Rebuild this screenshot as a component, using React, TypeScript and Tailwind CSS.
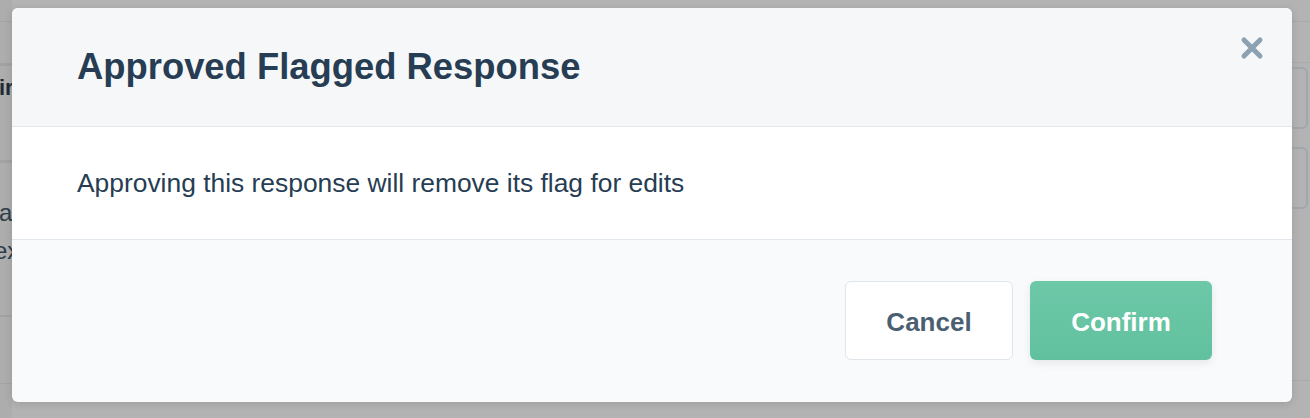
import React from 'react';

// Backdrop strip on the left edge (page content dimmed by the overlay)
const LeftStrip: React.FC = () => (
  <div className="w-[12px] shrink-0 flex flex-col overflow-hidden bg-[#adadad]">
    <div className="h-[22px] border-b border-[#a3a3a3]" />
    <div className="h-[41px]" />
    <div className="h-[3px] bg-[#a2a2a2]" />
    <div className="h-[94px] flex flex-col items-start pt-[11px] whitespace-nowrap text-[22px] font-bold text-[#1e2a35] leading-none">
      <span className="ml-[-1px]">ir</span>
    </div>
    <div className="h-[3px] bg-[#a2a2a2]" />
    <div className="h-[152px] flex flex-col items-start pt-[31px] whitespace-nowrap text-[24px] text-[#2d3d4c] leading-[38px]">
      <span className="ml-[-1px]">a</span>
      <span className="ml-[-6px]">ex</span>
    </div>
    <div className="h-[2px] bg-[#a2a2a2]" />
    <div className="h-[66px]" />
    <div className="h-[1px] bg-[#a3a3a3]" />
  </div>
);

// Backdrop strip on the right edge
const RightStrip: React.FC = () => (
  <div className="flex-1 flex flex-col bg-[#b3b3b3]">
    <div className="h-[22px] border-b border-[#a9a9a9]" />
    <div className="h-[41px] border-b border-[#ababab]" />
    <div className="h-[4px]" />
    <div className="h-[62px] ml-[-4px] mr-[2px] rounded-[6px] border-2 border-[#a3a7ab]" />
    <div className="h-[18px]" />
    <div className="h-[62px] ml-[-4px] mr-[2px] rounded-[6px] border-2 border-[#a3a7ab]" />
    <div className="h-[172px] border-b border-[#a9a9a9]" />
  </div>
);

const CloseIcon: React.FC = () => (
  <svg width="26" height="26" viewBox="0 0 26 26" fill="none">
    <path d="M5 5L21 21M21 5L5 21" stroke="#8ca2b3" strokeWidth="5" strokeLinecap="round" />
  </svg>
);

export default function App() {
  return (
    <div
      className="relative w-[1310px] h-[418px] overflow-hidden flex bg-[#b3b3b3]"
      style={{ fontFamily: '"Liberation Sans", Arial, sans-serif' }}
    >
      <LeftStrip />
      <div className="w-[1280px] shrink-0" />
      <RightStrip />

      {/* Modal */}
      <div className="absolute left-[12px] top-[8px] w-[1280px] h-[394px] rounded-[6px] overflow-hidden flex flex-col bg-[#f9fafc] shadow-[0_2px_8px_rgba(0,0,0,0.12)]">
        <div className="h-[119px] shrink-0 flex items-center justify-between pl-[65px] pr-[27px] bg-[#f5f7f9] border-b border-[#e1e7ec]">
          <h2 className="text-[36.4px] font-bold text-[#263d53] leading-none">
            Approved Flagged Response
          </h2>
          <button className="self-start mt-[27px] w-[26px] h-[26px] flex items-center justify-center">
            <CloseIcon />
          </button>
        </div>
        <div className="h-[113px] shrink-0 flex items-center pl-[65px] bg-white border-b border-[#e1e7ec]">
          <p className="text-[26.4px] text-[#263d53] leading-none">
            Approving this response will remove its flag for edits
          </p>
        </div>
        <div className="flex-1 flex justify-end items-start gap-[17px] pt-[41px] pr-[80px]">
          <button className="w-[168px] h-[79px] pt-[3px] rounded-[6px] bg-white border border-[#dfe5ea] text-[26px] font-bold text-[#4b5f73]">
            Cancel
          </button>
          <button className="w-[182px] h-[79px] pt-[3px] rounded-[6px] bg-gradient-to-b from-[#6dc8a8] to-[#61c19f] text-[26px] font-bold text-white shadow-[0_3px_8px_rgba(0,0,0,0.08)]">
            Confirm
          </button>
        </div>
      </div>
    </div>
  );
}
